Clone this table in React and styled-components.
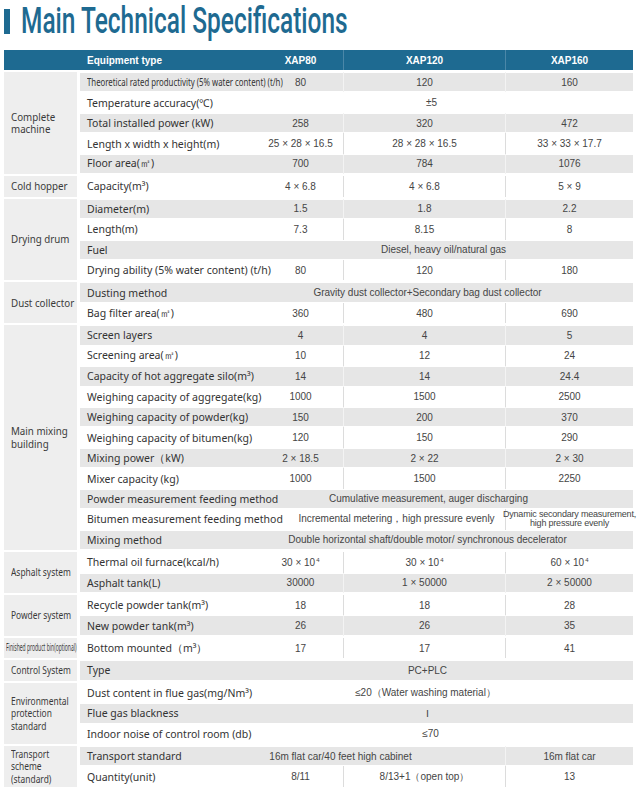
import React from "react";
import styled, { createGlobalStyle } from "styled-components";

const GlobalStyle = createGlobalStyle`
  body {
    margin: 0;
    background: #ffffff;
    font-family: "Noto Sans", "Liberation Sans", sans-serif;
  }
`;

const BLUE = "#1e6a91";
const GRAY = "#e6e6e6";

const Page = styled.div`
  width: 637px;
  padding: 0 4px;
  box-sizing: border-box;
`;

const TitleRow = styled.div`
  display: flex;
  align-items: center;
  height: 42px;
  margin-bottom: 8px;
`;

const TitleBar = styled.div`
  width: 6px;
  height: 25px;
  background: ${BLUE};
  margin-right: 11px;
  margin-top: 1px;
`;

const Title = styled.h1`
  margin: 0;
  font-family: "Roboto", "Liberation Sans", sans-serif;
  font-weight: 500;
  font-size: 36.5px;
  line-height: 1;
  color: ${BLUE};
  white-space: nowrap;
  transform: scaleX(0.67);
  transform-origin: left center;
`;

const Table = styled.div`
  width: 629px;
  display: flex;
  flex-direction: column;
`;

const HeadRow = styled.div`
  display: grid;
  grid-template-columns: 76px 178px 85px 162px 128px;
  height: 20px;
  background: ${BLUE};
  color: #ffffff;
  font-family: "Liberation Sans", Arial, sans-serif;
  font-weight: bold;
  font-size: 10px;
`;

const HeadCell = styled.div`
  display: flex;
  align-items: center;
  justify-content: ${(p) => (p.$left ? "flex-start" : "center")};
  padding-left: ${(p) => (p.$left ? "7px" : "0")};
  border-left: ${(p) => (p.$divider ? "1px solid #4b87a8" : "none")};
`;

const Group = styled.div`
  display: flex;
  margin-top: 2px;
`;

const Category = styled.div`
  width: 73px;
  flex-shrink: 0;
  margin-right: 3px;
  background: #eeeeee;
  display: flex;
  align-items: center;
  padding-left: ${(p) => p.$pad}px;
  box-sizing: border-box;
  font-size: ${(p) => p.$size}px;
  line-height: 1.18;
  color: #3a3a3a;
  overflow: hidden;
`;

const CategoryText = styled.span`
  display: inline-block;
  white-space: pre;
  transform: scaleX(${(p) => p.$squeeze});
  transform-origin: left center;
`;

const Rows = styled.div`
  flex: 1;
  display: flex;
  flex-direction: column;
`;

const Row = styled.div`
  display: grid;
  grid-template-columns: 178px 85px 162px 128px;
  height: 20.45px;
  background: ${(p) => (p.$gray ? GRAY : "#ffffff")};
  box-shadow: ${(p) =>
    p.$gray ? "inset 0 1px 0 #ffffff, inset 0 -1px 0 #ffffff" : "none"};
`;

const Param = styled.div`
  display: flex;
  align-items: center;
  padding-left: 7px;
  font-size: 10.5px;
  color: #333333;
  white-space: nowrap;
  overflow: visible;
  position: relative;
  z-index: 1;
`;

const ParamText = styled.span`
  display: inline-block;
  transform: scaleX(${(p) => p.$squeeze});
  transform-origin: left center;
  font-size: ${(p) => p.$size}px;
`;

const Value = styled.div`
  grid-column: span ${(p) => p.$span};
  display: flex;
  align-items: center;
  justify-content: center;
  text-align: center;
  font-family: "Liberation Sans", Arial, sans-serif;
  font-size: 10px;
  color: #454545;
  white-space: nowrap;
  padding-left: ${(p) => (p.$shift > 0 ? p.$shift * 2 : 0)}px;
  padding-right: ${(p) => (p.$shift < 0 ? -p.$shift * 2 : 0)}px;
  border-left: ${(p) =>
    p.$divider ? `1px solid ${p.$gray ? "#f3f3f3" : "#dcdcdc"}` : "none"};
`;

const Sup = styled.sup`
  font-size: 6px;
  line-height: 0;
  vertical-align: 4px;
  margin-left: 1px;
`;

const SmallNote = styled.span`
  font-size: 9px;
  line-height: 9px;
  letter-spacing: -0.2px;
  white-space: pre;
`;

const groups = [
  {
    name: "Complete\nmachine",
    rows: [
      {
        p: "Theoretical rated productivity (5% water content) (t/h)",
        squeeze: 0.78,
        size: 10,
        g: 1,
        v: ["80", "120", "160"],
      },
      { p: "Temperature accuracy(℃)", g: 0, v: [{ t: "±5", span: 3, shift: -14 }] },
      { p: "Total installed power (kW)", g: 1, v: ["258", "320", "472"] },
      {
        p: "Length x width x height(m)",
        g: 0,
        v: ["25 × 28 × 16.5", "28 × 28 × 16.5", "33 × 33 × 17.7"],
      },
      { p: "Floor area(㎡)", g: 1, v: ["700", "784", "1076"] },
    ],
  },
  {
    name: "Cold hopper",
    rows: [{ p: "Capacity(m³)", g: 0, v: ["4 × 6.8", "4 × 6.8", "5 × 9"] }],
  },
  {
    name: "Drying drum",
    rows: [
      { p: "Diameter(m)", g: 1, v: ["1.5", "1.8", "2.2"] },
      { p: "Length(m)", g: 0, v: ["7.3", "8.15", "8"] },
      { p: "Fuel", g: 1, v: [{ t: "Diesel, heavy oil/natural gas", span: 3, shift: -2 }] },
      { p: "Drying ability (5% water content) (t/h)", g: 0, v: ["80", "120", "180"] },
    ],
  },
  {
    name: "Dust collector",
    rows: [
      {
        p: "Dusting method",
        g: 1,
        v: [{ t: "Gravity dust collector+Secondary bag dust collector", span: 3, shift: -18 }],
      },
      { p: "Bag filter area(㎡)", g: 0, v: ["360", "480", "690"] },
    ],
  },
  {
    name: "Main mixing\nbuilding",
    rows: [
      { p: "Screen layers", g: 1, v: ["4", "4", "5"] },
      { p: "Screening area(㎡)", g: 0, v: ["10", "12", "24"] },
      { p: "Capacity of hot aggregate silo(m³)", g: 1, v: ["14", "14", "24.4"] },
      { p: "Weighing capacity of aggregate(kg)", g: 0, v: ["1000", "1500", "2500"] },
      { p: "Weighing capacity of powder(kg)", g: 1, v: ["150", "200", "370"] },
      { p: "Weighing capacity of bitumen(kg)", g: 0, v: ["120", "150", "290"] },
      { p: "Mixing power（kW)", g: 1, v: ["2 × 18.5", "2 × 22", "2 × 30"] },
      { p: "Mixer capacity (kg)", g: 0, v: ["1000", "1500", "2250"] },
      {
        p: "Powder measurement feeding method",
        g: 1,
        v: [{ t: "Cumulative measurement, auger discharging", span: 3, shift: -17 }],
      },
      {
        p: "Bitumen measurement feeding method",
        g: 0,
        v: [
          { t: "Incremental metering，high pressure evenly", span: 2, shift: 15 },
          { note: "Dynamic secondary measurement,\nhigh pressure evenly" },
        ],
      },
      {
        p: "Mixing method",
        g: 1,
        v: [
          {
            t: "Double horizontal shaft/double motor/ synchronous decelerator",
            span: 3,
            shift: -18,
          },
        ],
      },
    ],
  },
  {
    name: "Asphalt system",
    squeeze: 0.8,
    rows: [
      {
        p: "Thermal oil furnace(kcal/h)",
        g: 0,
        v: [{ t: "30 × 10", sup: "4" }, { t: "30 × 10", sup: "4" }, { t: "60 × 10", sup: "4" }],
      },
      { p: "Asphalt tank(L)", g: 1, v: ["30000", "1 × 50000", "2 × 50000"] },
    ],
  },
  {
    name: "Powder system",
    squeeze: 0.8,
    rows: [
      { p: "Recycle powder tank(m³)", g: 0, v: ["18", "18", "28"] },
      { p: "New powder tank(m³)", g: 1, v: ["26", "26", "35"] },
    ],
  },
  {
    name: "Finished product bin(optional)",
    squeeze: 0.5,
    size: 10,
    pad: 2,
    rows: [{ p: "Bottom mounted（m³）", g: 0, v: ["17", "17", "41"] }],
  },
  {
    name: "Control System",
    squeeze: 0.8,
    rows: [{ p: "Type", g: 1, v: [{ t: "PC+PLC", span: 3, shift: -18 }] }],
  },
  {
    name: "Environmental\nprotection\nstandard",
    squeeze: 0.8,
    rows: [
      {
        p: "Dust content in flue gas(mg/Nm³)",
        g: 0,
        v: [{ t: "≤20（Water washing material）", span: 3, shift: -20 }],
      },
      { p: "Flue gas blackness", g: 1, v: [{ t: "Ⅰ", span: 3, shift: -18 }] },
      { p: "Indoor noise of control room (db)", g: 0, v: [{ t: "≤70", span: 3, shift: -15 }] },
    ],
  },
  {
    name: "Transport\nscheme\n(standard)",
    squeeze: 0.8,
    rows: [
      {
        p: "Transport standard",
        g: 1,
        v: [{ t: "16m flat car/40 feet high cabinet", span: 2, shift: -41 }, "16m flat car"],
      },
      { p: "Quantity(unit)", g: 0, v: ["8/11", "8/13+1（open top）", "13"] },
    ],
  },
];

const SpecRow = ({ row }) => {
  let col = 0;
  return (
    <Row $gray={row.g === 1}>
      <Param>
        <ParamText $squeeze={row.squeeze || 1} $size={row.size || 10.5}>
          {row.p}
        </ParamText>
      </Param>
      {row.v.map((cell, i) => {
        const c = typeof cell === "string" ? { t: cell } : cell;
        const span = c.span || 1;
        const start = col;
        col += span;
        return (
          <Value
            key={i}
            $span={span}
            $shift={c.shift || 0}
            $divider={start > 0}
            $gray={row.g === 1}
          >
            {c.note ? (
              <SmallNote>{c.note}</SmallNote>
            ) : (
              <span>
                {c.t}
                {c.sup && <Sup>{c.sup}</Sup>}
              </span>
            )}
          </Value>
        );
      })}
    </Row>
  );
};

const App = () => {
  return (
    <Page>
      <GlobalStyle />
      <TitleRow>
        <TitleBar />
        <Title>Main Technical Specifications</Title>
      </TitleRow>
      <Table>
        <HeadRow>
          <HeadCell />
          <HeadCell $left>Equipment type</HeadCell>
          <HeadCell>XAP80</HeadCell>
          <HeadCell $divider>XAP120</HeadCell>
          <HeadCell $divider>XAP160</HeadCell>
        </HeadRow>
        {groups.map((group) => (
          <Group key={group.name}>
            <Category $pad={group.pad ?? 7} $size={group.size || 10.5}>
              <CategoryText $squeeze={group.squeeze || 0.93}>{group.name}</CategoryText>
            </Category>
            <Rows>
              {group.rows.map((row) => (
                <SpecRow key={row.p} row={row} />
              ))}
            </Rows>
          </Group>
        ))}
      </Table>
    </Page>
  );
};

export default App;
